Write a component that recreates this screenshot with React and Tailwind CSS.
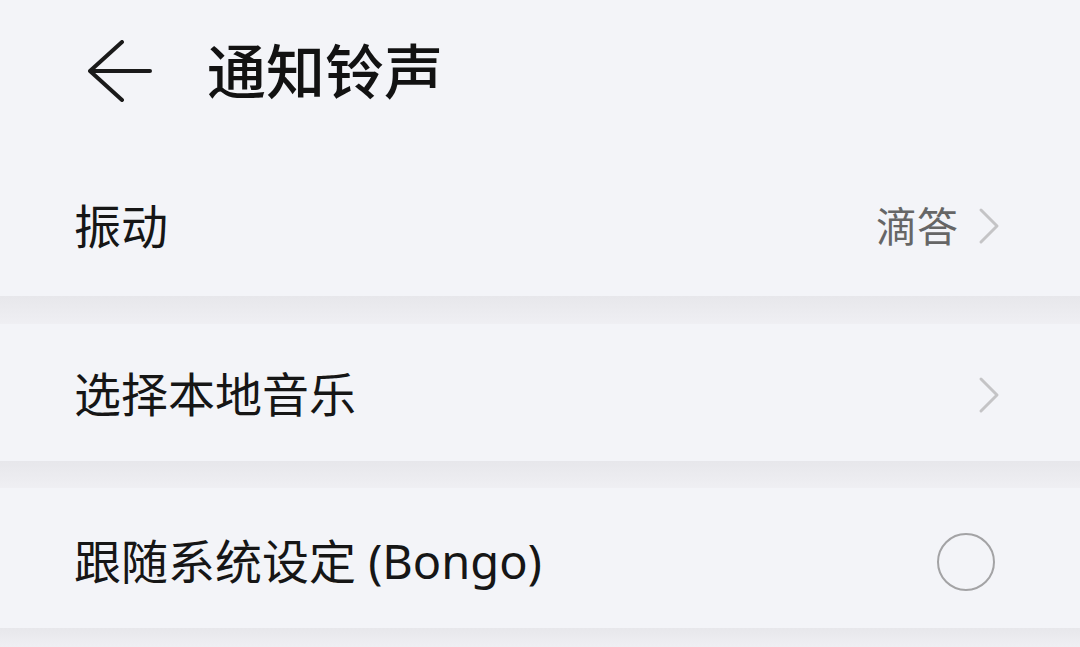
import React from 'react';

const font = { fontFamily: '"Noto Sans", "Noto Sans CJK SC", sans-serif' };

function Chevron() {
  return (
    <svg width="22" height="38" viewBox="0 0 22 38" fill="none">
      <polyline points="3,3 19,19 3,35" stroke="#c4c4c6" strokeWidth="3" strokeLinecap="round" strokeLinejoin="round" />
    </svg>
  );
}

function Gap({ h = 'h-[28px]' }) {
  return <div className={`${h} bg-gradient-to-b from-[#e7e7eb] to-[#efeff3]`} />;
}

export default function App() {
  return (
    <div className="w-[1080px] h-[647px] overflow-hidden bg-[#f3f4f8] text-[#161616]" style={font}>
      <div className="h-[170px] pb-[28px] flex items-center pl-[88px]">
        <svg width="64" height="62" viewBox="0 0 64 62" fill="none">
          <path d="M34 2 L2 31 L34 60 M2 31 H62" stroke="#1a1a1a" strokeWidth="4" strokeLinecap="round" strokeLinejoin="round" />
        </svg>
        <h1 className="ml-[55px] text-[59px] font-medium leading-none text-[#121212]">通知铃声</h1>
      </div>

      <div className="h-[126px] pb-[14px] flex items-center justify-between pl-[74px] pr-[80px]">
        <span className="text-[47px] leading-none">振动</span>
        <div className="flex items-center gap-[20px]">
          <span className="text-[41px] leading-none text-[#666666]">滴答</span>
          <Chevron />
        </div>
      </div>

      <Gap />

      <div className="h-[137px] pt-[4px] flex items-center justify-between pl-[74px] pr-[80px]">
        <span className="text-[47px] leading-none">选择本地音乐</span>
        <Chevron />
      </div>

      <Gap h="h-[27px]" />

      <div className="h-[140px] pt-[7px] flex items-center justify-between pl-[74px] pr-[85px]">
        <span className="text-[47px] leading-none">跟随系统设定 (Bongo)</span>
        <div className="w-[58px] h-[58px] rounded-full border-[2.5px] border-[#a3a3a5]" />
      </div>

      <Gap h="h-[19px]" />
    </div>
  );
}
